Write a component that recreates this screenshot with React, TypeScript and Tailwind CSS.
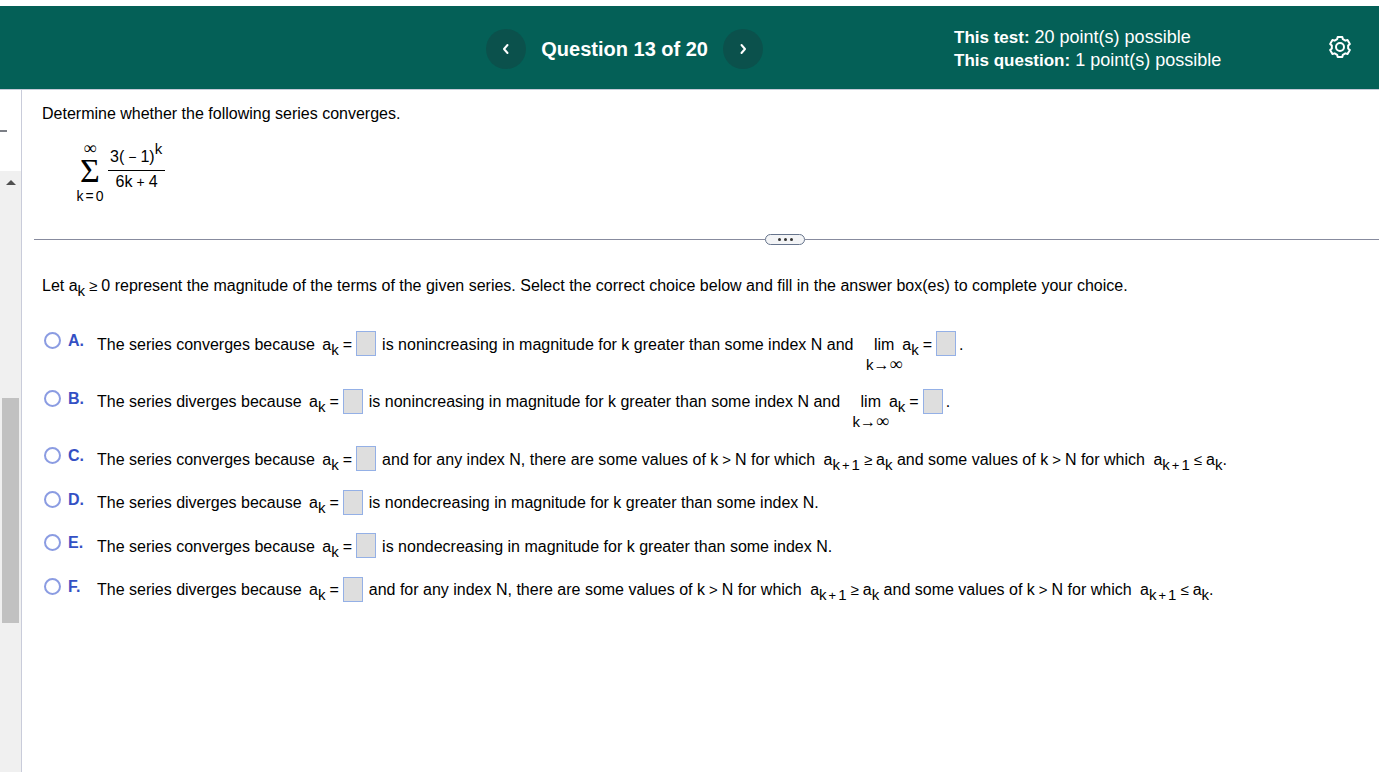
import type { ReactNode } from "react";

function Sub({ children }: { children: ReactNode }) {
  return <sub className="static align-[-5px] text-[15px] leading-none">{children}</sub>;
}

function Rel({ children }: { children: ReactNode }) {
  return <span className="mx-1 text-[15px] leading-none">{children}</span>;
}

function Ak() {
  return (
    <span className="whitespace-nowrap">
      a<Sub>k</Sub>
    </span>
  );
}

function AkNext() {
  return (
    <span className="ml-1 whitespace-nowrap">
      a
      <Sub>
        k<span className="mx-[2px] text-[13px]">+</span>1
      </Sub>
    </span>
  );
}

function Blank({ label }: { label: string }) {
  return (
    <>
      <span className="mx-1">=</span>
      <input
        type="text"
        aria-label={label}
        className="inline-block h-[25px] w-5 border border-[#94b0e6] bg-[#dedede] align-[1px] outline-none"
      />
    </>
  );
}

function Limit({ label }: { label: string }) {
  return (
    <span className="whitespace-nowrap">
      <span className="-mb-[2px] ml-2 inline-flex flex-col items-center align-baseline">
        <span className="leading-5">lim</span>
        <span className="flex items-baseline text-[15px] leading-4">
          k
          <span className="font-['Liberation_Serif',serif] text-[16px]">→</span>
          <span className="font-['Liberation_Serif',serif] text-[18px] leading-none">∞</span>
        </span>
      </span>
      <Ak />
      <Blank label={label} />
      <span className="ml-[3px]">.</span>
    </span>
  );
}

function Compare() {
  return (
    <>
      and for any index N, there are some values of k<Rel>&gt;</Rel>N for which <AkNext />
      <Rel>≥</Rel>
      <Ak /> and some values of k<Rel>&gt;</Rel>N for which <AkNext />
      <Rel>≤</Rel>
      <Ak />.
    </>
  );
}

const choices: { id: string; verb: string; rest: ReactNode }[] = [
  {
    id: "A",
    verb: "converges",
    rest: (
      <>
        is nonincreasing in magnitude for k greater than some index N and <Limit label="Limit for choice A" />
      </>
    ),
  },
  {
    id: "B",
    verb: "diverges",
    rest: (
      <>
        is nonincreasing in magnitude for k greater than some index N and <Limit label="Limit for choice B" />
      </>
    ),
  },
  { id: "C", verb: "converges", rest: <Compare /> },
  {
    id: "D",
    verb: "diverges",
    rest: <>is nondecreasing in magnitude for k greater than some index N.</>,
  },
  {
    id: "E",
    verb: "converges",
    rest: <>is nondecreasing in magnitude for k greater than some index N.</>,
  },
  { id: "F", verb: "diverges", rest: <Compare /> },
];

function Chevron({ d }: { d: string }) {
  return (
    <svg viewBox="0 0 12 12" className="size-3" fill="none" stroke="currentColor" strokeWidth="2" strokeLinecap="round" strokeLinejoin="round" aria-hidden="true">
      <path d={d} />
    </svg>
  );
}

// Six rounded teeth: two outer corners and two valley corners per tooth.
const gearPoints = [0, 60, 120, 180, 240, 300]
  .flatMap((start) => [
    [start - 13, 10.3],
    [start + 13, 10.3],
    [start + 20, 8.3],
    [start + 40, 8.3],
  ])
  .map(([degrees, radius]) => {
    const angle = ((degrees - 90) * Math.PI) / 180;
    return `${(12 + radius * Math.cos(angle)).toFixed(2)},${(12 + radius * Math.sin(angle)).toFixed(2)}`;
  })
  .join(" ");

function Gear() {
  return (
    <svg viewBox="0 0 24 24" className="size-6" fill="none" stroke="currentColor" strokeWidth="2" strokeLinejoin="round" aria-hidden="true">
      <polygon points={gearPoints} />
      <circle cx="12" cy="12" r="4" />
    </svg>
  );
}

function Header() {
  return (
    <header className="grid min-h-[84px] grid-cols-[954fr_425fr] items-center border-b border-[#c6cad8] bg-[#046057] pt-[2px] text-white">
      <nav className="flex items-center justify-end gap-[15px] pr-[191px]">
        <button type="button" aria-label="Previous question" className="flex size-10 items-center justify-center rounded-full bg-[#0b514c]">
          <Chevron d="M7.5 2 4 6l3.5 4" />
        </button>
        <h1 className="text-xl font-bold whitespace-nowrap">Question 13 of 20</h1>
        <button type="button" aria-label="Next question" className="flex size-10 items-center justify-center rounded-full bg-[#0b514c]">
          <Chevron d="M4.5 2 8 6l-3.5 4" />
        </button>
      </nav>
      <div className="flex items-center justify-between pr-[27px]">
        <div className="text-lg leading-[22px]">
          <p>
            <strong className="text-[17px]">This test:</strong> 20 point(s) possible
          </p>
          <p>
            <strong className="text-[17px]">This question:</strong> 1 point(s) possible
          </p>
        </div>
        <button type="button" aria-label="Settings" className="mb-1">
          <Gear />
        </button>
      </div>
    </header>
  );
}

function Rail() {
  return (
    <aside className="flex w-[22px] shrink-0 flex-col border-r border-[#c9ccda]">
      <div className="flex h-[81px] items-center">
        <div className="h-[2px] w-[7px] bg-[#7c7f86]" />
      </div>
      <div className="flex grow flex-col items-center bg-[#f0f0f0] pt-[9px]">
        <svg viewBox="0 0 10 5" className="h-[5px] w-[10px]" fill="#505050" aria-hidden="true">
          <path d="M5 0 10 5H0z" />
        </svg>
        <div className="mt-[213px] h-[225px] w-[17px] bg-[#c1c1c1]" />
      </div>
    </aside>
  );
}

function Series() {
  return (
    <div className="mt-[14px] ml-[54px] flex items-start gap-1">
      <div className="flex w-7 flex-col items-center">
        <span className="font-['Liberation_Serif',serif] text-[18px] leading-4">∞</span>
        <span className="font-['Liberation_Serif',serif] text-[34px] leading-[30px]">Σ</span>
        <span className="text-sm leading-5 whitespace-nowrap">
          k<span className="mx-[2px]">=</span>0
        </span>
      </div>
      <div className="mt-px flex flex-col items-center">
        <div className="border-b border-black pr-[3px] pl-[2px] leading-[26px] whitespace-nowrap">
          3(<span className="mx-1 text-sm">−</span>1)
          <sup className="static align-[8px] text-[15px] leading-none">k</sup>
        </div>
        <div className="leading-[22px] whitespace-nowrap">
          6k<span className="mx-1 text-sm">+</span>4
        </div>
      </div>
    </div>
  );
}

export default function App() {
  return (
    <div className="flex min-h-screen flex-col bg-white pt-[6px] font-['Liberation_Sans',Arial,sans-serif] text-base text-black">
      <Header />
      <div className="flex grow">
        <Rail />
        <main className="grow">
          <p className="mt-3 ml-5 leading-6">Determine whether the following series converges.</p>
          <Series />
          <div className="mt-7 ml-3 flex items-center">
            <div className="h-px flex-[731] bg-[#878b9e]" />
            <button
              type="button"
              aria-label="Resize panels"
              className="flex h-[11px] w-10 items-center justify-center gap-[3px] rounded-full border border-[#66748c] bg-[#f3f4f6]"
            >
              <span className="size-[3px] rounded-full bg-[#333]" />
              <span className="size-[3px] rounded-full bg-[#333]" />
              <span className="size-[3px] rounded-full bg-[#333]" />
            </button>
            <div className="h-px flex-[574] bg-[#878b9e]" />
          </div>
          <p className="mt-[29px] ml-5 leading-6">
            Let <Ak />
            <Rel>≥</Rel>0 represent the magnitude of the terms of the given series. Select the correct choice below and
            fill in the answer box(es) to complete your choice.
          </p>
          <fieldset aria-label="Answer choices" className="mt-[33px] ml-[22px] flex flex-col gap-[18px]">
            {choices.map((choice) => (
              <div key={choice.id} className="flex items-start">
                <input
                  type="radio"
                  name="answer"
                  id={`choice-${choice.id}`}
                  className="mt-px size-[17px] shrink-0 appearance-none rounded-full border-2 border-[#8b9ce2] bg-white checked:bg-[#3b52c9]"
                />
                <label htmlFor={`choice-${choice.id}`} className="w-9 shrink-0 pl-[7px] leading-5 font-bold text-[#3450c4]">
                  {choice.id}.
                </label>
                <div className="leading-[22px]">
                  <span className="mr-[3px]">The series {choice.verb} because </span>
                  <Ak />
                  <Blank label={`Magnitude for choice ${choice.id}`} />
                  <span className="ml-[6px]">{choice.rest}</span>
                </div>
              </div>
            ))}
          </fieldset>
        </main>
      </div>
    </div>
  );
}
